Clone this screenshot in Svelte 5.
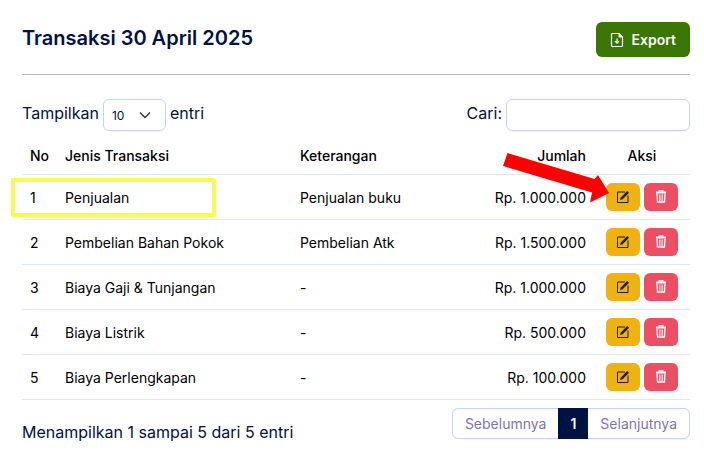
<script>
  const rows = [
    { name: 'Penjualan', note: 'Penjualan buku', amount: 'Rp. 1.000.000', marked: true },
    { name: 'Pembelian Bahan Pokok', note: 'Pembelian Atk', amount: 'Rp. 1.500.000' },
    { name: 'Biaya Gaji & Tunjangan', note: '-', amount: 'Rp. 1.000.000' },
    { name: 'Biaya Listrik', note: '-', amount: 'Rp. 500.000' },
    { name: 'Biaya Perlengkapan', note: '-', amount: 'Rp. 100.000' }
  ];
  let size = $state('10');
  let query = $state('');
</script>

<main>
  <header>
    <h1>Transaksi 30 April 2025</h1>
    <button class="export" type="button">
      <svg width="14" height="16" viewBox="0 0 14 16" fill="none" stroke="currentColor" stroke-width="1.2" aria-hidden="true">
        <path d="M2.500 1.500h6.500l3.500 3.500v8.500a1 1 0 0 1-1 1h-9a1 1 0 0 1-1-1v-11a1 1 0 0 1 1-1z" />
        <path d="M8.500 1v4.500H13z" fill="currentColor" stroke="none" />
        <path d="M7 6.500v4.500M5 9.200L7 11.200l2-2" />
      </svg>
      Export
    </button>
  </header>

  <div class="controls">
    <label>
      Tampilkan
      <select bind:value={size}>
        <option>10</option>
        <option>25</option>
        <option>50</option>
      </select>
      entri
    </label>
    <label>
      Cari:
      <input type="search" bind:value={query} />
    </label>
  </div>

  <table>
    <thead>
      <tr>
        <th class="no">No</th>
        <th class="name">Jenis Transaksi</th>
        <th>Keterangan</th>
        <th class="amount">Jumlah</th>
        <th class="actions">Aksi</th>
      </tr>
    </thead>
    <tbody>
      {#each rows as row, i}
        <tr>
          <td class:marked={row.marked}>{i + 1}</td>
          <td>{row.name}</td>
          <td>{row.note}</td>
          <td class="amount">{row.amount}</td>
          <td class="actions">
            <div class="buttons">
              <button class="edit" type="button" aria-label="Ubah">
                <svg width="14" height="14" viewBox="0 0 14 14" aria-hidden="true">
                  <path d="M9 2H1.500v10.500h10.500V5.500" fill="none" stroke="currentColor" stroke-width="1" />
                  <path d="M4 10l.8-2.600L11.200 1l1.800 1.800-6.400 6.400z" fill="currentColor" />
                </svg>
              </button>
              <button class="delete" type="button" aria-label="Hapus">
                <svg width="12" height="14" viewBox="0 0 12 14" fill="none" stroke="currentColor" aria-hidden="true">
                  <path d="M1 2.500h10" stroke-width="2" />
                  <path d="M4 1.500V1h4v.5M2 3.500l.5 8.500h7l.5-8.500" stroke-width="1.300" />
                  <path d="M4.400 4.500v6.500M6 4.500v6.500M7.600 4.500v6.500" stroke-width=".8" />
                </svg>
              </button>
            </div>
            {#if row.marked}
              <svg class="arrow" width="106" height="50" viewBox="0 0 106 50" aria-hidden="true">
                <path d="M4.500 0L91.500 26L95 22L106 40L87 49.500L89 39.500L0 13z" fill="#fe0000" />
              </svg>
            {/if}
          </td>
        </tr>
      {/each}
    </tbody>
  </table>

  <footer>
    <p>Menampilkan 1 sampai 5 dari 5 entri</p>
    <nav aria-label="Halaman">
      <button type="button">Sebelumnya</button>
      <button type="button" class="current" aria-current="page">1</button>
      <button type="button">Selanjutnya</button>
    </nav>
  </footer>
</main>

<style>
  :global(body) {
    background: #fff;
  }
  main {
    box-sizing: border-box;
    padding: 22px 14px 22px 22px;
    font: 16px/24px Inter, sans-serif;
    color: #001242;
  }
  main * {
    box-sizing: border-box;
  }
  button,
  input,
  select {
    font-family: inherit;
    margin: 0;
  }
  header {
    display: flex;
    justify-content: space-between;
    align-items: flex-start;
    padding-bottom: 17px;
    border-bottom: 1px solid #bcb9cb;
  }
  h1 {
    margin: 4px 0 0;
    font-size: 20px;
    line-height: 24px;
    font-weight: 600;
  }
  .export {
    display: flex;
    align-items: center;
    gap: 8px;
    height: 35px;
    padding: 0 14px;
    border: 0;
    border-radius: 6px;
    background: #3a7603;
    color: #fff;
    font-size: 14px;
    font-weight: 600;
  }
  .controls {
    display: flex;
    justify-content: space-between;
    padding: 24px 0 8px;
  }
  label {
    display: flex;
    align-items: flex-start;
    gap: 4px;
    line-height: 28px;
  }
  select {
    width: 63px;
    height: 32px;
    padding: 0 8px;
    border: 1px solid #c0d4ff;
    border-radius: 6px;
    appearance: none;
    font-size: 12px;
    color: #001242;
    background: url("data:image/svg+xml,%3Csvg xmlns='http://www.w3.org/2000/svg' viewBox='0 0 12 12' fill='none' stroke='%23343a40' stroke-width='1.500'%3E%3Cpath d='M1 3.500l5 5 5-5'/%3E%3C/svg%3E") no-repeat right 14px center / 12px 12px #fff;
  }
  input {
    width: 184px;
    height: 32px;
    padding: 4px 8px;
    border: 1px solid #c0d4ff;
    border-radius: 6px;
    font-size: 14px;
    appearance: none;
  }
  table {
    width: 100%;
    table-layout: fixed;
    border-collapse: separate;
    border-spacing: 0;
    font-size: 14px;
    line-height: 20px;
    color: #000;
  }
  th,
  td {
    padding: 1px 8px 0;
    height: 45px;
    border-bottom: 1px solid #dfe7fc;
    text-align: left;
    font-weight: 400;
  }
  th {
    height: 36px;
    padding: 0 8px 1px;
    font-weight: 500;
  }
  .no {
    width: 35px;
  }
  .name {
    width: 235px;
  }
  .amount {
    text-align: right;
  }
  .actions {
    position: relative;
    width: 96px;
    padding-top: 0;
    text-align: center;
  }
  .buttons {
    display: flex;
    justify-content: center;
    gap: 4px;
  }
  .buttons button {
    display: flex;
    align-items: center;
    justify-content: center;
    flex: none;
    width: 34px;
    height: 28px;
    padding: 0;
    border: 0;
    border-radius: 6px;
  }
  .edit {
    background: #f0b210;
    color: #1b1b2b;
  }
  .delete {
    background: #ec4e63;
    color: #fff;
  }
  .marked {
    position: relative;
  }
  .marked::after {
    content: '';
    box-sizing: border-box;
    position: absolute;
    left: -11px;
    top: 3px;
    width: 205px;
    height: 39px;
    border: 4px solid #f8fb4f;
    border-radius: 2px;
  }
  .arrow {
    position: absolute;
    right: 81px;
    top: -22px;
  }
  footer {
    display: flex;
    justify-content: space-between;
    align-items: flex-start;
    padding-top: 8px;
  }
  p {
    margin: 12px 0 0;
  }
  nav {
    display: flex;
    height: 31px;
    border: 1px solid #c0d4ff;
    border-radius: 6px;
  }
  nav button {
    padding: 0 12px;
    border: 0;
    background: none;
    color: #7f76a6;
    font-size: 14px;
  }
  nav .current {
    margin: -1px 0;
    background: #001242;
    color: #fff;
    font-weight: 600;
  }
</style>
